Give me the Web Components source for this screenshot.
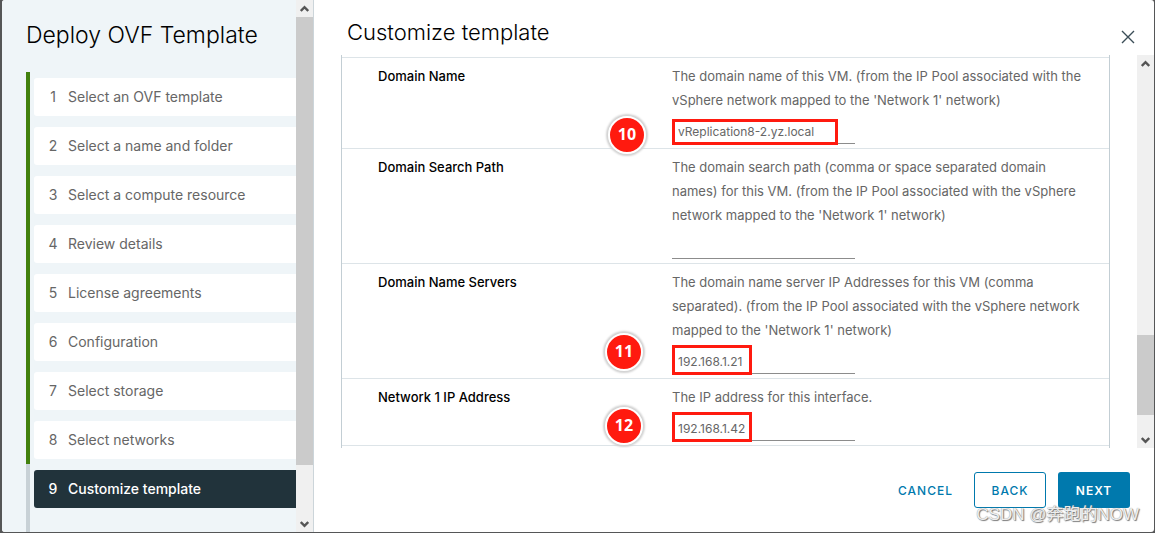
<!DOCTYPE html>
<html lang="en">
<head>
<meta charset="utf-8">
<meta name="viewport" content="width=device-width, initial-scale=1">
<title>Deploy OVF Template</title>
<style>
  html, body { margin: 0; height: 100%; background: #555657; }
  body { font-family: Inter, "Liberation Sans", "Noto Sans CJK SC", sans-serif; font-size: 13px; color: #666; }
</style>
</head>
<body>
<ovf-wizard></ovf-wizard>

<script>
const define = (name, html, setup) => {
  const template = document.createElement('template');
  template.innerHTML = html;
  customElements.define(name, class extends HTMLElement {
    constructor() {
      super();
      this.attachShadow({ mode: 'open' }).append(template.content.cloneNode(true));
    }
    connectedCallback() { if (setup) setup(this, this.shadowRoot); }
  });
};

/* Scrollbar: arrow, track with thumb, arrow */
define('scroll-rail', `
<style>
  :host { display: flex; flex-direction: column; flex: 0 0 17px; background: #f0f0f0; }
  .arrow { flex: 0 0 17px; display: flex; align-items: center; justify-content: center; }
  .before { flex: var(--before, 0) 1 0; }
  .thumb { flex: var(--thumb, 1) 1 0; background: #cbcbcb; }
  .after { flex: var(--after, 1) 1 0; }
  svg { display: block; fill: none; stroke: #555; stroke-width: 2.4; }
</style>
<div class="arrow"><svg width="9" height="8" viewBox="0 0 9 8"><path d="M.8 6 4.5 2.2 8.2 6"/></svg></div>
<div class="before"></div><div class="thumb"></div><div class="after"></div>
<div class="arrow"><svg width="9" height="8" viewBox="0 0 9 8"><path d="M.8 2 4.5 5.8 8.2 2"/></svg></div>`);

define('wizard-step', `
<style>
  :host { display: block; }
  button { display: flex; align-items: center; gap: 8px; width: 100%; height: 38px; margin: 0; padding: 0 0 2px 12px;
    border: 0; border-radius: 3px 0 0 3px; background: #fff; color: #666; font: inherit; font-size: 14px; text-align: left; }
  .number { flex: 0 0 14px; text-align: center; }
  :host([active]) button { background: #21333b; color: #fff; font-weight: 500; }
</style>
<button type="button"><span class="number"></span><slot></slot></button>`,
(host, root) => {
  root.querySelector('.number').textContent = host.getAttribute('number');
  if (host.hasAttribute('active')) root.querySelector('button').setAttribute('aria-current', 'step');
});

/* Annotation: red frame over a field and a numbered badge beside it */
define('call-out', `
<style>
  :host { display: block; position: absolute; inset: 0; pointer-events: none; }
  .frame { position: absolute; left: 0; bottom: -1px; box-sizing: border-box; width: var(--w); height: var(--h);
    border: 3px solid #ff1a0f; }
  .badge { position: absolute; left: var(--cx); top: var(--cy); box-sizing: border-box; width: 38px; height: 38px;
    margin: -19px; padding-bottom: 2px; border: 2px solid #fff; border-radius: 50%; background: #ff1a0f; color: #fff;
    box-shadow: 0 0 2px 2px #d2d2d2; display: flex; align-items: center; justify-content: center;
    font: bold 16px "Open Sans", sans-serif; }
</style>
<div class="frame"></div><div class="badge"><slot></slot></div>`);

define('property-row', `
<style>
  :host { display: grid; grid-template-columns: 294px 1fr; padding: 6px 20px 4px 36px; border-bottom: 1px solid #dde4e8; line-height: 24px; }
  label { color: #000; font-weight: 500; }
  p { margin: 0 0 8px; }
  .field { position: relative; width: 183px; }
  input { display: block; box-sizing: border-box; width: 100%; height: 24px; margin: 0; padding: 0 6px;
    border: 0; border-bottom: 1px solid #8c8c8c; background: none; color: #666; font: inherit; font-size: 12px; outline: 0; }
</style>
<label for="value"></label>
<div><p id="help"><slot></slot></p>
<div class="field"><input id="value" type="text" aria-describedby="help"><slot name="note"></slot></div></div>`,
(host, root) => {
  root.querySelector('label').textContent = host.getAttribute('label');
  root.querySelector('input').value = host.getAttribute('value') || '';
});

define('action-button', `
<style>
  :host { display: block; }
  button { height: 36px; min-width: 72px; margin: 0; padding: 0 8px; border: 1px solid transparent; border-radius: 3px;
    background: none; color: #0079ad; font: inherit; font-size: 12px; font-weight: 500; letter-spacing: 1px; text-transform: uppercase; }
  :host([kind=outline]) button { border-color: #0079ad; }
  :host([kind=primary]) button { background: #0079ad; color: #fff; font-weight: 600; }
</style>
<button type="button"><slot></slot></button>`);

define('wizard-nav', `
<style>
  :host { display: flex; flex: 0 0 312px; box-sizing: border-box; min-height: 0; background: #eff5f8; border-right: 1px solid #ccd5da; }
  nav { flex: 1; min-width: 0; padding-left: 24px; display: flex; flex-direction: column; overflow: hidden; }
  h1 { flex: 0 0 72px; margin: 0; line-height: 70px; font-size: 23px; font-weight: 300; color: #000; white-space: nowrap; }
  ol { flex: 1; margin: 0; padding: 0; list-style: none; display: flex; flex-direction: column; }
  li { border-left: 4px solid #42810e; padding: 6px 0 5px 4px; }
  li:last-child { flex: 1; border-color: #c8d1d6; }
  scroll-rail { --before: 0; --thumb: 448; --after: 50; }
</style>
<nav aria-label="Wizard steps">
  <h1>Deploy OVF Template</h1>
  <ol>
    <li><wizard-step number="1">Select an OVF template</wizard-step></li>
    <li><wizard-step number="2">Select a name and folder</wizard-step></li>
    <li><wizard-step number="3">Select a compute resource</wizard-step></li>
    <li><wizard-step number="4">Review details</wizard-step></li>
    <li><wizard-step number="5">License agreements</wizard-step></li>
    <li><wizard-step number="6">Configuration</wizard-step></li>
    <li><wizard-step number="7">Select storage</wizard-step></li>
    <li><wizard-step number="8">Select networks</wizard-step></li>
    <li><wizard-step number="9" active>Customize template</wizard-step></li>
  </ol>
</nav>
<scroll-rail></scroll-rail>`);

define('property-list', `
<style>
  :host { display: flex; flex: 1; min-height: 0; padding-left: 27px; }
  .rows { flex: 1; min-width: 0; margin-right: 27px; border: solid #c3ced4; border-width: 0 1px; overflow: hidden; }
  .previous { height: 2px; border-bottom: 1px solid #dde4e8; }
  scroll-rail { --before: 263; --thumb: 80; --after: 16; }
</style>
<div class="rows"><div class="previous"></div><slot></slot></div>
<scroll-rail></scroll-rail>`);

define('ovf-wizard', `
<style>
  :host { display: flex; box-sizing: border-box; height: 100vh; padding: 0 1px 1px 2px; }
  .dialog { flex: 1; min-width: 0; display: flex; background: #fff; border-radius: 3px; overflow: hidden; }
  main { flex: 1; min-width: 0; display: flex; flex-direction: column; position: relative; }
  header { flex: 0 0 55px; box-sizing: border-box; display: flex; align-items: flex-start; justify-content: space-between; padding: 10px 17px 0 33px; }
  h2 { margin: 0; line-height: 44px; font-size: 22px; font-weight: 300; color: #000; }
  .close { display: flex; align-items: center; justify-content: center; width: 18px; height: 18px; margin: 18px 0 0; padding: 0; border: 0; background: none; }
  .close svg { stroke: #3b4d57; stroke-width: 1.4; }
  footer { display: flex; justify-content: flex-end; gap: 12px; padding: 24px; }
  .watermark { position: absolute; right: 15px; bottom: 5px; font: 17px/24px "Liberation Sans", "Noto Sans CJK SC", sans-serif; color: #eee;
    text-shadow: 1px 1px 1px #777, 0 0 1px #888; pointer-events: none; }
</style>
<div class="dialog" role="dialog" aria-label="Deploy OVF Template">
  <wizard-nav></wizard-nav>
  <main>
    <header>
      <h2>Customize template</h2>
      <button class="close" type="button" aria-label="Close"><svg width="14" height="14" viewBox="0 0 14 14"><path d="M1 1l12 12M13 1L1 13"/></svg></button>
    </header>
    <property-list>
      <property-row label="Domain Name" value="vReplication8-2.yz.local">The domain name of this VM. (from the IP Pool associated with the vSphere network mapped to the 'Network 1' network)<call-out slot="note" style="--w:166px;--h:26px;--cx:-45px;--cy:15px">10</call-out></property-row>
      <property-row label="Domain Search Path">The domain search path (comma or space separated domain names) for this VM. (from the IP Pool associated with the vSphere network mapped to the 'Network 1' network)</property-row>
      <property-row label="Domain Name Servers" value="192.168.1.21">The domain name server IP Addresses for this VM (comma separated). (from the IP Pool associated with the vSphere network mapped to the 'Network 1' network)<call-out slot="note" style="--w:80px;--h:30px;--cx:-48px;--cy:2px">11</call-out></property-row>
      <property-row label="Network 1 IP Address" value="192.168.1.42">The IP address for this interface.<call-out slot="note" style="--w:80px;--h:30px;--cx:-48px;--cy:9px">12</call-out></property-row>
    </property-list>
    <footer>
      <action-button>Cancel</action-button>
      <action-button kind="outline">Back</action-button>
      <action-button kind="primary">Next</action-button>
    </footer>
    <div class="watermark">CSDN @奔跑的NOW</div>
  </main>
</div>`);
</script>
</body>
</html>
